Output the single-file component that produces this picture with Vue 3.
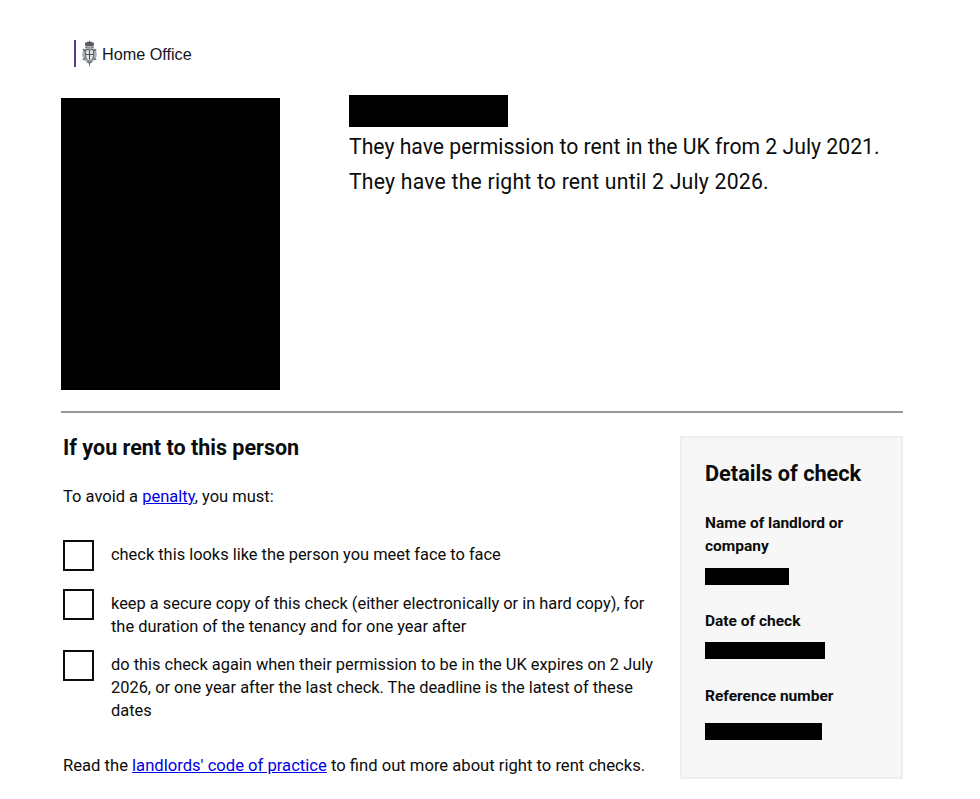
<template>
  <div class="page">
    <header class="brand">
      <svg class="crest" width="17" height="27" viewBox="0 0 16 26" aria-hidden="true">
        <path d="M8 .5l1 1.500 1.500-.5.5 1.500 1.500-.5-.5 3.500H4l-.5-3.500 1.500.5.5-1.500 1.500.5z" fill="#555a60"/>
        <path d="M4 6.500h8v1H4z" fill="#2b2f36"/>
        <ellipse cx="8" cy="14" rx="7" ry="7.300" fill="#a9adb3"/>
        <path d="M4.200 9.500h7.600v5.500c0 2.800-1.700 4.500-3.800 5.500-2.100-1-3.800-2.700-3.800-5.500z" fill="#e2e3e6" stroke="#4a4e55" stroke-width=".8"/>
        <path d="M8 10v9M4.500 14h7" stroke="#4a4e55" stroke-width="1"/>
        <path d="M1.500 9l2.500 1.500M14.500 9L12 10.500M1.500 19L4 17.500M14.500 19L12 17.500" stroke="#5a5e65" stroke-width="1.200"/>
        <path d="M4.500 21h7l-3.500 2-3.500-2z" fill="#6a6e75"/>
        <path d="M8 22.500v3" stroke="#777b82" stroke-width="1"/>
      </svg>
      <span class="brand-name">Home Office</span>
    </header>

    <section class="summary">
      <div class="photo"></div>
      <div class="status">
        <div class="redact-name"></div>
        <p>They have permission to rent in the UK from 2 July 2021.</p>
        <p class="until">They have the right to rent until 2 July 2026.</p>
      </div>
    </section>

    <hr class="rule" />

    <section class="lower">
      <div class="main">
        <h2>If you rent to this person</h2>
        <p class="intro">To avoid a <a href="#">penalty</a>, you must:</p>
        <ul class="tasks">
          <li v-for="task in tasks" :key="task">
            <span class="box"></span>
            <span class="task-text">{{ task }}</span>
          </li>
        </ul>
        <p class="outro">Read the <a href="#">landlords' code of practice</a> to find out more about right to rent checks.</p>
      </div>
      <aside class="details">
        <h3>Details of check</h3>
        <div v-for="d in details" :key="d.label" class="detail" :class="d.cls">
          <div class="detail-label">{{ d.label }}</div>
          <div class="bar" :style="{ width: d.width + 'px' }"></div>
        </div>
      </aside>
    </section>
  </div>
</template>

<script setup>
const tasks = [
  'check this looks like the person you meet face to face',
  'keep a secure copy of this check (either electronically or in hard copy), for the duration of the tenancy and for one year after',
  'do this check again when their permission to be in the UK expires on 2 July 2026, or one year after the last check. The deadline is the latest of these dates'
]
const details = [
  { label: 'Name of landlord or company', width: 84, cls: 'd1' },
  { label: 'Date of check', width: 120, cls: 'd2' },
  { label: 'Reference number', width: 117, cls: 'd3' }
]
</script>

<style>
html, body { margin: 0; background: #fff; }
</style>

<style scoped>
.page {
  width: 842px;
  height: 799px;
  margin-left: 61px;
  font-family: Roboto, "Liberation Sans", sans-serif;
  color: #0b0c0c;
  overflow: hidden;
}
.brand {
  display: flex;
  align-items: center;
  height: 27px;
  margin: 40px 0 0 13px;
  padding-left: 5px;
  border-left: 2px solid #5c3d8c;
  gap: 4px;
}
.crest { flex: none; }
.brand-name {
  font-family: "Liberation Sans", Arial, sans-serif;
  font-size: 16.200px;
  color: #14141e;
  margin-top: 2px;
}
.summary {
  display: flex;
  margin-top: 28px;
  height: 316px;
}
.photo {
  flex: none;
  width: 219px;
  height: 292px;
  margin-top: 3px;
  background: #000;
}
.status { margin-left: 69px; }
.redact-name {
  width: 159px;
  height: 32px;
  background: #000;
}
.status p {
  margin: 0;
  font-size: 21.200px;
  line-height: 35px;
  white-space: nowrap;
}
.status p:first-of-type { margin-top: 2px; }
.status .until { letter-spacing: .22px; }
.rule {
  margin: 0;
  border: 0;
  height: 2px;
  background: #999;
}
.lower {
  display: flex;
  justify-content: space-between;
  margin-top: 24px;
}
.main { width: 594px; margin-left: 2px; }
h2 {
  margin: -1px 0 0;
  font-size: 21.500px;
  line-height: 24px;
  font-weight: 700;
}
.main p { font-size: 16.500px; line-height: 24px; margin: 0; }
.intro { margin-top: 25px !important; }
a { color: #0000e6; text-decoration: underline; }
.tasks {
  list-style: none;
  margin: 0;
  padding: 0;
}
.tasks li {
  display: flex;
  align-items: flex-start;
  gap: 17px;
  font-size: 16.400px;
  line-height: 23px;
}
.tasks li:nth-child(1) { margin-top: 31px; }
.tasks li:nth-child(2) { margin-top: 18px; }
.tasks li:nth-child(3) { margin-top: 12px; }
.tasks li .task-text { padding-top: 3px; }
.box {
  flex: none;
  width: 27px;
  height: 27px;
  border: 2px solid #0b0c0c;
}
.main .outro { margin-top: 32px; white-space: nowrap; font-size: 16.630px; }
.details {
  box-sizing: border-box;
  width: 223px;
  height: 343px;
  margin-top: -1px;
  background: #f7f7f7;
  border: 2px solid #eee;
  padding: 22px 22px 0 23px;
}
h3 {
  margin: 0;
  font-size: 21.700px;
  line-height: 28px;
  font-weight: 700;
}
.detail { margin-top: 24px; }
.detail-label {
  font-size: 15.500px;
  line-height: 23px;
  font-weight: 700;
}
.bar { height: 17px; background: #000; margin-top: 10px; }
.d2 { margin-top: 25px; }
.d2 .bar { margin-top: 9px; }
.d3 { margin-top: 26px; }
.d3 .bar { margin-top: 15px; }
</style>
